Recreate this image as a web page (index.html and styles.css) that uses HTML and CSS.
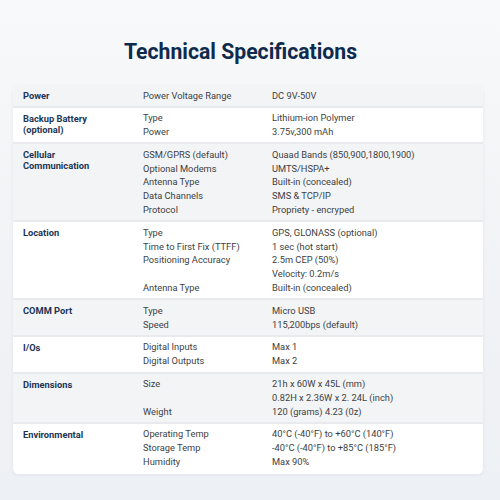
FILE: index.html
```html
<!DOCTYPE html>
<html>
<head>
<meta charset="utf-8">
<link rel="stylesheet" href="styles.css">
</head>
<body>
<main class="page">
  <h1 class="title">Technical Specifications</h1>
  <div class="table">
    <div class="row alt">
      <div class="label">Power</div>
      <div class="pairs">
        <div class="k">Power Voltage Range</div><div class="v">DC 9V-50V</div>
      </div>
    </div>
    <div class="row">
      <div class="label">Backup Battery<br>(optional)</div>
      <div class="pairs">
        <div class="k">Type</div><div class="v">Lithium-ion Polymer</div>
        <div class="k">Power</div><div class="v">3.75v,300 mAh</div>
      </div>
    </div>
    <div class="row alt">
      <div class="label">Cellular<br>Communication</div>
      <div class="pairs">
        <div class="k">GSM/GPRS (default)</div><div class="v">Quaad Bands (850,900,1800,1900)</div>
        <div class="k">Optional Modems</div><div class="v">UMTS/HSPA+</div>
        <div class="k">Antenna Type</div><div class="v">Built-in (concealed)</div>
        <div class="k">Data Channels</div><div class="v">SMS &amp; TCP/IP</div>
        <div class="k">Protocol</div><div class="v">Propriety - encryped</div>
      </div>
    </div>
    <div class="row">
      <div class="label">Location</div>
      <div class="pairs">
        <div class="k">Type</div><div class="v">GPS, GLONASS (optional)</div>
        <div class="k">Time to First Fix (TTFF)</div><div class="v">1 sec (hot start)</div>
        <div class="k">Positioning Accuracy</div><div class="v">2.5m CEP (50%)</div>
        <div class="k"></div><div class="v">Velocity: 0.2m/s</div>
        <div class="k">Antenna Type</div><div class="v">Built-in (concealed)</div>
      </div>
    </div>
    <div class="row alt">
      <div class="label">COMM Port</div>
      <div class="pairs">
        <div class="k">Type</div><div class="v">Micro USB</div>
        <div class="k">Speed</div><div class="v">115,200bps (default)</div>
      </div>
    </div>
    <div class="row">
      <div class="label">I/Os</div>
      <div class="pairs">
        <div class="k">Digital Inputs</div><div class="v">Max 1</div>
        <div class="k">Digital Outputs</div><div class="v">Max 2</div>
      </div>
    </div>
    <div class="row alt">
      <div class="label">Dimensions</div>
      <div class="pairs">
        <div class="k">Size</div><div class="v">21h x 60W x 45L (mm)</div>
        <div class="k"></div><div class="v">0.82H x 2.36W x 2. 24L (inch)</div>
        <div class="k">Weight</div><div class="v">120 (grams) 4.23 (0z)</div>
      </div>
    </div>
    <div class="row last">
      <div class="label">Environmental</div>
      <div class="pairs">
        <div class="k">Operating Temp</div><div class="v">40°C (-40°F) to +60°C (140°F)</div>
        <div class="k">Storage Temp</div><div class="v">-40°C (-40°F) to +85°C (185°F)</div>
        <div class="k">Humidity</div><div class="v">Max 90%</div>
      </div>
    </div>
  </div>
</main>
</body>
</html>
```
FILE: styles.css
```css
* { box-sizing: border-box; }
html, body { margin: 0; padding: 0; }
body {
  width: 500px;
  height: 500px;
  overflow: hidden;
  font-family: Roboto, "Liberation Sans", sans-serif;
  background: linear-gradient(180deg, #f8f9fa 0%, #f2f4f6 40%, #edf0f4 100%);
}
.page {
  padding: 36px 17px 0 13px;
}
.title {
  margin: 0 0 17px;
  text-align: center;
  font-size: 21.2px;
  line-height: 32px;
  font-weight: 700;
  color: #0e2a4c;
  padding-right: 15px;
}
.table {
  background: #ffffff;
  border-radius: 6px;
  overflow: hidden;
  box-shadow: 0 1px 4px rgba(30, 40, 60, 0.06);
}
.row {
  display: grid;
  grid-template-columns: 120px 1fr;
  padding: 3.5px 10px;
  border-bottom: 2px solid #e8eaed;
  background: #ffffff;
}
.row.alt { background: #f3f4f6; }
.row.last { border-bottom: none; padding-bottom: 5px; }
.label {
  font-size: 9.3px;
  line-height: 11px;
  font-weight: 700;
  color: #1a3556;
  padding-top: 1.5px;
}
.pairs {
  display: grid;
  grid-template-columns: 129px 1fr;
  font-size: 9.3px;
  line-height: 13.8px;
  color: #3c3f44;
}
.k, .v { min-height: 13.8px; }
```
